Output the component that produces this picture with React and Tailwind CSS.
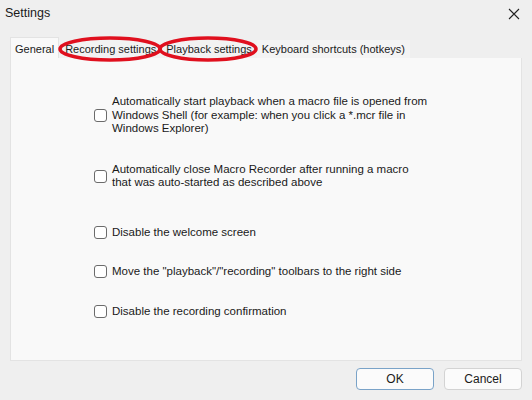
import React from 'react'

const options = [
  {
    lines: [
      'Automatically start playback when a macro file is opened from',
      'Windows Shell (for example: when you click a *.mcr file in',
      'Windows Explorer)',
    ],
    mt: 'mt-[36px]',
  },
  {
    lines: ['Automatically close Macro Recorder after running a macro', 'that was auto-started as described above'],
    mt: 'mt-[27px]',
  },
  { lines: ['Disable the welcome screen'], mt: 'mt-[36px]' },
  { lines: ['Move the "playback"/"recording" toolbars to the right side'], mt: 'mt-[26px]' },
  { lines: ['Disable the recording confirmation'], mt: 'mt-[26px]' },
]

function Checkbox() {
  return <span className="block h-[13px] w-[13px] shrink-0 rounded-[3px] border border-[#6b6b6b] bg-white" />
}

function Option({ lines, mt }) {
  return (
    <div className={`flex items-center gap-[5px] ${mt}`}>
      <Checkbox />
      <div className="text-[11.5px] leading-[13.5px] text-[#1a1a1a]">
        {lines.map((l) => (
          <div key={l}>{l}</div>
        ))}
      </div>
    </div>
  )
}

export default function App() {
  return (
    <div className="relative h-[400px] w-[532px] overflow-hidden bg-[#efefef] font-['Liberation_Sans',Arial,sans-serif] text-[#1a1a1a]">
      {/* title bar */}
      <div className="flex h-[26px] items-center justify-between pl-[5px] pr-[12px] pt-[1px]">
        <span className="text-[12.5px]">Settings</span>
        <svg width="12" height="12" viewBox="0 0 12 12" className="text-[#222]">
          <path d="M1 1 L11 11 M11 1 L1 11" stroke="currentColor" strokeWidth="1.1" fill="none" />
        </svg>
      </div>

      {/* tabs */}
      <div className="mt-[12px] flex h-[20px] items-end pl-[10px] text-[11px]">
        <div className="flex h-[21px] items-start border border-b-0 border-[#e3e3e3] bg-[#f9f9f9] px-[4px] pt-[3px]">
          General
        </div>
        <div className="flex h-[18px] items-center bg-[#f2f2f2] pl-[6px] pr-[5px]">Recording settings</div>
        <div className="flex h-[18px] items-center bg-[#f2f2f2] px-[5px]">Playback settings</div>
        <div className="flex h-[18px] items-center bg-[#f4f4f4] px-[5px]">Keyboard shortcuts (hotkeys)</div>
      </div>

      {/* panel */}
      <div className="mx-[10px] h-[303px] border border-t-0 border-[#e3e3e3] bg-[#f9f9f9] pl-[83px]">
        <div className="h-px" />
        {options.map((o) => (
          <Option key={o.lines[0]} lines={o.lines} mt={o.mt} />
        ))}
      </div>

      {/* buttons */}
      <div className="mt-[7px] flex justify-end gap-[10px] pr-[10px] text-[12px]">
        <button className="h-[22px] w-[78px] rounded-[4px] border border-[#7aa3c8] bg-[#fbfbfb]">OK</button>
        <button className="h-[22px] w-[78px] rounded-[4px] border border-[#d3d3d3] bg-[#fbfbfb]">Cancel</button>
      </div>

      {/* red annotation marks */}
      <svg className="pointer-events-none absolute left-0 top-0" width="532" height="400">
        <ellipse cx="110" cy="49" rx="50" ry="11" fill="none" stroke="#e0101e" strokeWidth="3.5" />
        <ellipse cx="208" cy="49" rx="48" ry="11" fill="none" stroke="#e0101e" strokeWidth="3.5" />
      </svg>
    </div>
  )
}
